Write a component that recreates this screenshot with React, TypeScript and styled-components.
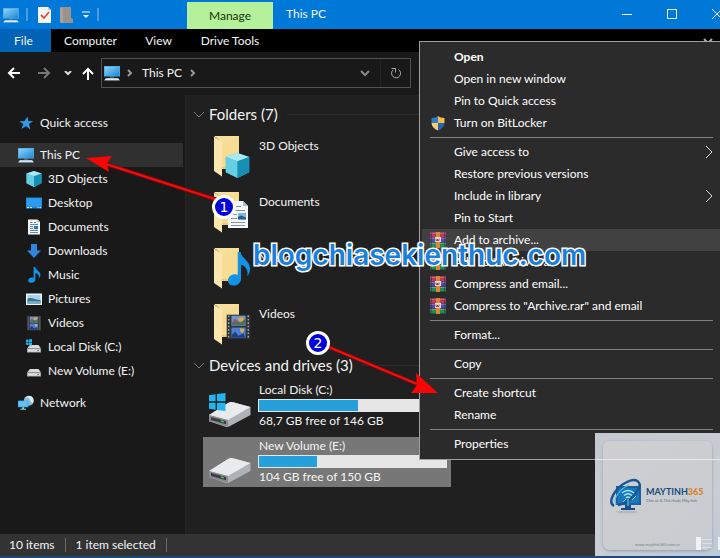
import React from "react";
import styled, { createGlobalStyle, css } from "styled-components";

const Global = createGlobalStyle`
  * { box-sizing: border-box; }
  body { margin: 0; background: #202020; color: #f4f4f4; font: 12px/16px Lato, "Open Sans", sans-serif; }
  button { font: inherit; color: inherit; background: none; border: 0; padding: 0; text-align: left; white-space: nowrap; }
  a { color: inherit; text-decoration: none; }
  h2, ul, p { margin: 0; padding: 0; font-weight: 400; list-style: none; }
  svg { display: block; flex: none; }
`;

const Window = styled.div`
  position: relative;
  min-height: 100vh;
  overflow: hidden;
  display: flex;
  flex-direction: column;
  background: #191919;
  border-bottom: 2px solid #1d4a78;
`;

/* Title bar */
const TitleBar = styled.header`
  display: flex;
  height: 29px;
  background: #0078d7;
`;
const QuickTools = styled.div`
  width: 187px;
  padding-left: 3px;
  display: flex;
  align-items: center;
`;
const ToolButton = styled.button<{ $gap: number }>`
  margin-right: ${(p) => p.$gap}px;
`;
const ToolDivider = styled.span<{ $gap: number }>`
  width: 2px;
  height: 13px;
  margin-right: ${(p) => p.$gap}px;
  background: #5299dc;
`;
const ContextLabel = styled.div`
  width: 86px;
  margin-top: 2px;
  padding-top: 6px;
  text-align: center;
  color: #16330a;
  background: #b5f09b;
`;
const WindowTitle = styled.span`
  flex: 1;
  padding: 6px 13px;
`;
const WindowButton = styled.button`
  width: 45px;
  display: flex;
  justify-content: center;
  align-items: center;
  padding-bottom: 2px;
`;
const WindowButtons = styled.div`
  display: flex;
  margin-right: -19px;
`;

/* Ribbon */
const Ribbon = styled.nav`
  display: flex;
  height: 23px;
  background: #000;
`;
const RibbonTab = styled.button<{ $width: number; $active?: boolean }>`
  width: ${(p) => p.$width}px;
  padding-right: ${(p) => (p.$active ? 4 : 0)}px;
  text-align: center;
  background: ${(p) => (p.$active ? "#0063b5" : "transparent")};
`;
const RibbonToggle = styled.button`
  margin-left: auto;
  padding: 0 7px;
`;

/* Address row */
const AddressRow = styled.div`
  display: flex;
  align-items: center;
  height: 43px;
  padding: 0 309px 1px 7px;
`;
const NavButton = styled.button<{ $gap: number }>`
  margin-right: ${(p) => p.$gap}px;
`;
const Address = styled.div`
  flex: 1;
  display: flex;
  align-items: center;
  height: 30px;
  padding-left: 2px;
  border: 1px solid #525252;
`;
const Crumb = styled.button`
  margin: 0 8px 0 6px;
`;
const AddressSpring = styled.span`
  flex: 1;
`;
const AddressAction = styled.button`
  width: 30px;
  height: 28px;
  display: flex;
  align-items: center;
  justify-content: center;
  & + & { border-left: 1px solid #222; }
`;

/* Body */
const Body = styled.div`
  flex: 1;
  display: grid;
  grid-template-columns: 186px 1fr;
`;
const Sidebar = styled.nav`
  padding-top: 16px;
  padding-right: 2px;
  border-right: 1px solid #242424;
  display: flex;
  flex-direction: column;
`;
const SideLink = styled.a<{ $nested?: boolean; $selected?: boolean; $apart?: boolean }>`
  display: flex;
  align-items: center;
  gap: 6px;
  height: 24px;
  padding-left: ${(p) => (p.$nested ? 26 : 18)}px;
  ${(p) => p.$apart && css`margin-top: 8px;`}
  ${(p) => p.$selected && css`background: #303030;`}
`;
const Content = styled.main`
  background: #202020;
  padding: 6px 0 0 8px;
`;
const GroupHeader = styled.h2`
  display: flex;
  align-items: center;
  gap: 5px;
  height: 26px;
  font-size: 15px;
  line-height: 26px;
  &::after { content: ""; flex: 1; height: 1px; margin-left: 4px; background: #2c2c2c; }
`;
const Tiles = styled.ul`
  display: grid;
  gap: 6px;
  margin: 3px 0 0 9px;
  padding-bottom: 4px;
`;
const Tile = styled.li<{ $selected?: boolean }>`
  display: grid;
  grid-template-columns: 55px 1fr;
  width: 248px;
  height: 50px;
  background: ${(p) => (p.$selected ? "#777" : "transparent")};
`;
const FolderArt = styled.div`
  padding: 5px 0 0 10px;
`;
const FolderName = styled.span`
  padding: 8px 0 0 1px;
`;
const DriveArt = styled.div`
  padding: 9px 0 0 5px;
`;
const DriveInfo = styled.div`
  padding: 1px 4px 0 0;
  & > p { padding-left: 1px; }
`;
const Gauge = styled.div`
  height: 13px;
  margin: 1px 0;
  padding: 1px;
  background: #e6e6e6;
`;
const GaugeFill = styled.div`
  height: 11px;
  background: #26a0da;
`;

const StatusBar = styled.footer`
  display: flex;
  align-items: center;
  height: 22px;
  padding-left: 9px;
  background: #333;
  & > span { padding-right: 10px; margin-right: 10px; line-height: 14px; border-right: 1px solid #6b6b6b; }
`;

/* Context menu */
const Menu = styled.div`
  position: absolute;
  top: 41px;
  left: 419px;
  right: -4px;
  padding: 4px 2px;
  background: #2b2b2b;
  border: 1px solid #a0a0a0;
  color: #fff;
`;
const MenuItem = styled.button<{ $strong?: boolean; $hover?: boolean }>`
  display: grid;
  grid-template-columns: 24px 1fr 9px;
  align-items: center;
  width: 100%;
  height: 22px;
  padding: 0 7px 0 8px;
  font-weight: ${(p) => (p.$strong ? 700 : 400)};
  background: ${(p) => (p.$hover ? "#414141" : "transparent")};
`;
const MenuRule = styled.hr`
  height: 1px;
  margin: 3px 8px;
  border: 0;
  background: #808080;
`;

/* Annotations */
const Arrows = styled.svg`
  position: absolute;
  top: 0;
  left: 0;
  pointer-events: none;
`;
const Step = styled.span<{ $x: number; $y: number }>`
  position: absolute;
  left: ${(p) => p.$x}px;
  top: ${(p) => p.$y}px;
  width: 24px;
  height: 24px;
  border: 3px solid #fff;
  border-radius: 50%;
  background: #0000d8;
  color: #fff;
  font: 14px/18px "DejaVu Sans", sans-serif;
  text-align: center;
`;
const Watermark = styled.div`
  position: absolute;
  left: 253px;
  top: 239px;
  font: 600 28px/32px Inter, sans-serif;
  color: #1b7fdd;
  -webkit-text-stroke: 3px #fff;
  paint-order: stroke fill;
`;
const Brand = styled.aside`
  position: absolute;
  right: 0;
  bottom: -2px;
  width: 125px;
  height: 125px;
  padding: 8px;
  background: linear-gradient(160deg, #c3c7cf, #cbced4 60%, #bec9d8);
`;
const BrandCard = styled.div`
  position: relative;
  height: 109px;
  display: flex;
  align-items: center;
  padding: 0 6px;
  border-radius: 7px;
  background: linear-gradient(135deg, #cfcfd0, #c8cbd1);
  box-shadow: 0 1px 3px #959ba5;
`;
const BrandText = styled.div`
  margin-left: 1px;
  color: #174a7c;
  font: 700 9px/10px Lato, sans-serif;
  white-space: nowrap;
  & > b { color: #d98324; }
  & > small { display: block; font-size: 4px; line-height: 7px; font-weight: 400; color: #56708b; }
`;
const BrandSite = styled.span`
  position: absolute;
  left: 0;
  right: 0;
  bottom: 2px;
  text-align: center;
  font: 4px/6px Lato, sans-serif;
  color: #7e848c;
`;
const MenuEdge = styled.div`
  position: absolute;
  left: 0;
  right: 0;
  top: 26px;
  height: 1px;
  background: #e8eaed;
`;
const ViewSwitch = styled.svg`
  position: absolute;
  right: 0;
  bottom: 8px;
`;

/* Icons */
const PcIcon = () => (
  <svg width="16" height="16" viewBox="0 0 16 16">
    <defs><linearGradient id="pc" x1="0" y1="0" x2="1" y2="1"><stop stopColor="#8fd6fb" /><stop offset="1" stopColor="#1d87d6" /></linearGradient></defs>
    <path d="M0 1h16v10.500H0z" fill="#4ea8dd" /><path d="M.7 1.700h14.600v9H.7z" fill="url(#pc)" />
    <path d="M6 11.500h4v1H6z" fill="#6c8ea8" /><path d="M2 13h12l2 2.500H0z" fill="#b5cbdc" /><path d="M1 14.500h14" stroke="#e4eef5" strokeWidth=".8" />
  </svg>
);
const StarIcon = () => (
  <svg width="16" height="16" viewBox="0 0 16 16"><path d="M9.500 1.500l.8 4.600 5 .2-4.300 2.500 1.200 5.700-4-3.300-4.800 2.600 2-4.700L1.200 6.500l5.300-.6z" fill="#2f9be6" /></svg>
);
const Cube = ({ size = 16 }: { size?: number }) => (
  <svg width={size} height={size} viewBox="0 0 16 16">
    <path d="M8 0l7.500 2.500v9.800L8 16 .5 12.300V2.500z" fill="#36b4cf" /><path d="M8 0l7.500 2.500L8 5.200.5 2.500z" fill="#a9e9f2" />
    <path d="M.5 2.500L8 5.200V16L.5 12.300z" fill="#66d0e2" /><path d="M8 5.200l7.500-2.700v9.800L8 16z" fill="#1590b4" />
  </svg>
);
const DesktopIcon = () => (
  <svg width="16" height="16" viewBox="0 0 16 16"><path d="M0 2.500h16v11H0z" fill="#1c86dc" /><path d="M.8 3.200h14.400v8.500H.8z" fill="#2c9cf0" /><path d="M1 12.600h2m1 0h2m5.500 0h1m1 0h1.500" stroke="#d8efff" /></svg>
);
const DocSheet = ({ width = 16, height = 16 }: { width?: number; height?: number }) => (
  <svg width={width} height={height} viewBox="0 0 16 16">
    <path d="M2 .5h9.500L14 3v12.500H2z" fill="#f2f6f9" /><path d="M11.500.5V3H14" fill="#aebdc9" />
    <path d="M4 3.500h2.500M8 3.500h2M4 5.500h8M4 7.500h3M4 9.500h3M4 11.500h8M4 13.500h8" stroke="#547b9b" strokeWidth=".9" /><path d="M8 7h4v3.200H8z" fill="#2d78b4" />
  </svg>
);
const DocLarge = () => (
  <svg width="21" height="28" viewBox="0 0 21 28">
    <path d="M0 0h15l5 5v22H0z" fill="#f5f7f9" /><path d="M15 0v5h5" fill="#b3bec8" />
    <path d="M3 5.500h10M3 9.500h14M3 13.500h6M3 17.500h6M3 21.500h14M3 24.500h14" stroke="#7d93a6" /><path d="M10 12h8v6.500h-8z" fill="#7fb6dd" /><path d="M10 16l3-1.500 5 2v2h-8z" fill="#24618f" />
  </svg>
);
const DownIcon = () => (
  <svg width="16" height="16" viewBox="0 0 16 16"><path d="M5 1h6v6.500h4L8 15 1 7.500h4z" fill="#2f86dc" /></svg>
);
const NoteIcon = ({ width = 16, height = 16 }: { width?: number; height?: number }) => (
  <svg width={width} height={height} viewBox="0 0 16 16" preserveAspectRatio="none">
    <path d="M7.600 0h1.500c.5 3 5 4 5.300 7.500.1 1.800-.8 3.200-1.600 4 .8-3-1-5-3.400-5.500v6.500c0 2-1.800 3.300-4 3.300-1.900 0-3.200-.9-3.200-2.400 0-1.700 1.900-2.900 3.900-2.900.6 0 1.100.1 1.500.3z" fill="#1393e6" />
  </svg>
);
const PictureIcon = () => (
  <svg width="16" height="16" viewBox="0 0 16 16"><path d="M0 2.500h16v11.500H0z" fill="#eef3f5" /><path d="M1.500 4h13v8.500h-13z" fill="#a2d5ea" /><path d="M1.500 7.500c4-2 7 1.500 13 1.500v3.500h-13z" fill="#35728c" /><path d="M1.500 10.500c4-1 9 0 13-.5v2.500h-13z" fill="#73aebd" /></svg>
);
const Film = ({ size = 16 }: { size?: number }) => (
  <svg width={size} height={size} viewBox="0 0 16 16">
    <path d="M1 1h14v14.500H1z" fill="#303136" /><path d="M3.800 1.600h8.400v6H3.800z" fill="#6c95cc" /><path d="M3.800 8.600h8.400v6.200H3.800z" fill="#4f7fd1" />
    <path d="M4 5.500l3-1 2 1.200 3-2v3.600H4z" fill="#4b7550" /><path d="M8 3l2-.7 1.500 1L10 5H8z" fill="#dfa546" /><path d="M5 4l1.500-.5.5 2H5z" fill="#b64382" />
    <path d="M4 13l2-2 2 2.500 3-1.500 1 2.700H4z" fill="#243f80" /><path d="M9 9l2.500.5L10.500 12 9 11z" fill="#d9ae58" />
    <path d="M2.200 1.500v14M13.800 1.500v14" stroke="#a0a5ab" strokeWidth=".9" strokeDasharray="1 1" />
  </svg>
);
const WinLogo = () => <path d="M0 1l3-.4v3.200H0zM3.600.5L7.500 0v3.800H3.600zM0 4.400h3v3.200L0 7.200zM3.600 4.400h3.900v3.800l-3.900-.5z" fill="#22b5ee" />;
const DiskIcon = ({ win }: { win?: boolean }) => (
  <svg width="16" height="16" viewBox="0 0 16 16">
    <path d="M4 6h8.500L15 9.500H1z" fill="#d9d9d9" /><path d="M1 9.500h14v4H1z" fill="#aaa" /><path d="M2 10.400h12v2.200H2z" fill="#e4e4e4" /><path d="M11 11.500h2" stroke="#33a34a" />
    {win && <g transform="scale(.8)"><WinLogo /></g>}
  </svg>
);
const NetworkIcon = () => (
  <svg width="16" height="16" viewBox="0 0 17 16"><circle cx="11.500" cy="5.500" r="5.300" fill="#8bbbd4" /><path d="M8 2.500c2-1 4 0 4.500 2s2 2 3 4c1.300-2 1.500-5-1-7.300C12 0 9.500.5 8 2.500z" fill="#dcecf2" /><path d="M0 5.500h11v7H0z" fill="#45aeec" /><path d="M.7 6.200L10 6v5.500H.7z" fill="#62c0f6" /><path d="M4.500 12.500h2v1.700h2v1h-6v-1h2z" fill="#9acbea" /></svg>
);
const Folder = ({ children }: { children: React.ReactNode }) => (
  <svg width="38" height="44" viewBox="0 0 38 44">
    <path d="M6 1h20v33H9z" fill="#eccb78" /><path d="M9 1h17v31H9z" fill="#f6dc94" />
    <path d="M1 1.500l8 5v35l-8-5.500z" fill="#fbe7ae" /><path d="M1 1h24v2L9 7z" fill="#f8df9b" />
    {children}
  </svg>
);
const FolderNested = {
  cube: <svg x="12" y="18" width="25" height="25"><Cube size={25} /></svg>,
  doc: <svg x="15" y="10" width="21" height="28"><DocLarge /></svg>,
  note: <svg x="11" y="5" width="30" height="34"><NoteIcon width={29} height={34} /></svg>,
  film: <svg x="12" y="10" width="26" height="28"><Film size={27} /></svg>,
};
const Drive = ({ win }: { win?: boolean }) => (
  <svg width="44" height="38" viewBox="0 0 44 38">
    <path d="M1 25l19-12q3-1.500 6-.5l16.500 4.500v8L22 36q-2 1.500-4 1L1 31z" fill="#aeb1b5" />
    <path d="M1 25l19-12q3-1.500 6-.5l16.500 4.500L20 30z" fill="#e9eaec" />
    <path d="M1 25l19 5v7L1 31.500z" fill="#898c90" /><path d="M3 27l15 4v3.300L3 30z" fill="#3b3f42" /><path d="M13 31l3 .8" stroke="#48bf67" strokeWidth="1.500" />
    {win && <g transform="translate(1 3) scale(2.2)"><WinLogo /></g>}
  </svg>
);
const ShieldIcon = () => (
  <svg width="16" height="16" viewBox="0 0 16 16"><path d="M8 1v7H1.500V3C4 3 6.500 2.300 8 1z" fill="#2d7cc9" /><path d="M8 1c1.500 1.300 4 2 6.500 2v5H8z" fill="#f2bb4b" /><path d="M1.500 8H8v7.500C4 14 1.800 11.500 1.500 8z" fill="#f6cd73" /><path d="M14.500 8H8v7.500c4-1.500 6.200-4 6.500-7.500z" fill="#2364ac" /></svg>
);
const RarIcon = () => (
  <svg width="16" height="16" viewBox="0 0 16 16">
    <path d="M0 .5h16V5H0z" fill="#c23557" /><path d="M0 5.500h16v4.700H0z" fill="#4b4cb4" /><path d="M0 10.700h16v4.800H0z" fill="#238b50" />
    <path d="M0 1.200h16M0 6.200h16M0 11.400h16" stroke="#e4a0a4" strokeWidth=".6" /><path d="M1.200.5v15M14.800.5v15" stroke="#262b42" strokeWidth=".7" />
    <path d="M6 0h4v16H6z" fill="#d7863a" /><path d="M5 5h6v5H5z" fill="#e9d8d8" /><path d="M6 6.500v2h1.500V7v1.500H9V6.500" fill="none" stroke="#7b3434" strokeWidth=".8" />
  </svg>
);
const Glyph = ({ d, w, h, color = "#fff", sw = 1 }: { d: string; w: number; h: number; color?: string; sw?: number }) => (
  <svg width={w} height={h} viewBox={`0 0 ${w} ${h}`}><path d={d} fill="none" stroke={color} strokeWidth={sw} /></svg>
);
const BrandLogo = () => (
  <svg width="36" height="37" viewBox="0 0 36 37">
    <ellipse cx="18" cy="35" rx="11" ry="1.500" fill="#b4b8bf" />
    <path d="M7 9h25v19H7z" fill="#1c5fa5" /><path d="M9 11h21v15H9z" fill="#1878be" /><path d="M16 28h6v3h4v2H12v-2h4z" fill="#174f8f" />
    <path d="M5 29C-2 25 6 11 17 5.500 27 0 34 5 29 13 26 19 17 27 9 28" fill="none" stroke="#1c568f" strokeWidth="2.500" />
    <path d="M7 27C3 22 12 11 20 8" fill="none" stroke="#53bde0" strokeWidth="1.200" />
    <path d="M13 16q6-5 12 0M15 18.500q4-3.500 8 0M17 21q2-2 4 0" fill="none" stroke="#a9e5e5" strokeWidth="1.300" /><path d="M19 22v7M23 23l4-4M14 25l3-3" stroke="#71cee4" />
  </svg>
);

const places = [
  { name: "Quick access", icon: <StarIcon /> },
  { name: "This PC", icon: <PcIcon />, selected: true, apart: true },
  { name: "3D Objects", icon: <Cube />, nested: true },
  { name: "Desktop", icon: <DesktopIcon />, nested: true },
  { name: "Documents", icon: <DocSheet />, nested: true },
  { name: "Downloads", icon: <DownIcon />, nested: true },
  { name: "Music", icon: <NoteIcon />, nested: true },
  { name: "Pictures", icon: <PictureIcon />, nested: true },
  { name: "Videos", icon: <Film />, nested: true },
  { name: "Local Disk (C:)", icon: <DiskIcon win />, nested: true },
  { name: "New Volume (E:)", icon: <DiskIcon />, nested: true },
  { name: "Network", icon: <NetworkIcon />, apart: true },
];
const folders = [
  { name: "3D Objects", art: FolderNested.cube },
  { name: "Documents", art: FolderNested.doc },
  { name: "Music", art: FolderNested.note },
  { name: "Videos", art: FolderNested.film },
];
const drives = [
  { name: "Local Disk (C:)", free: "68,7 GB free of 146 GB", used: 53, win: true },
  { name: "New Volume (E:)", free: "104 GB free of 150 GB", used: 31, selected: true },
];
type Entry = { label: string; icon?: React.ReactNode; strong?: boolean; hover?: boolean; sub?: boolean };
const menu: Entry[][] = [
  [{ label: "Open", strong: true }, { label: "Open in new window" }, { label: "Pin to Quick access" }, { label: "Turn on BitLocker", icon: <ShieldIcon /> }],
  [
    { label: "Give access to", sub: true }, { label: "Restore previous versions" }, { label: "Include in library", sub: true }, { label: "Pin to Start" },
    { label: "Add to archive...", icon: <RarIcon />, hover: true }, { label: 'Add to "Archive.rar"', icon: <RarIcon /> },
    { label: "Compress and email...", icon: <RarIcon /> }, { label: 'Compress to "Archive.rar" and email', icon: <RarIcon /> },
  ],
  [{ label: "Format..." }],
  [{ label: "Copy" }],
  [{ label: "Create shortcut" }, { label: "Rename" }],
  [{ label: "Properties" }],
];

export default function App() {
  return (
    <Window>
      <Global />
      <TitleBar>
        <QuickTools>
          <ToolButton $gap={7} aria-label="System menu"><PcIcon /></ToolButton>
          <ToolDivider $gap={10} />
          <ToolButton $gap={9} aria-label="Properties">
            <svg width="13" height="16" viewBox="0 0 13 16"><path d="M0 0h10l3 3v13H0z" fill="#f5f5f5" /><path d="M10 0v3h3" fill="#b7c2cb" /><path d="M3 8l3 3 5-6" fill="none" stroke="#df5032" strokeWidth="1.800" /></svg>
          </ToolButton>
          <ToolButton $gap={8} aria-label="New folder">
            <svg width="14" height="16" viewBox="0 0 14 16"><path d="M0 0h11v11l2 1v4H0z" fill="#9a928b" /><path d="M0 0l3 2v14l-3-2z" fill="#aaa19a" /></svg>
          </ToolButton>
          <ToolButton $gap={7} aria-label="Customize toolbar">
            <svg width="8" height="8" viewBox="0 0 8 8"><path d="M0 1h8" stroke="#fff" /><path d="M1 4h6L4 7z" fill="#fff" /></svg>
          </ToolButton>
          <ToolDivider $gap={0} />
        </QuickTools>
        <ContextLabel>Manage</ContextLabel>
        <WindowTitle>This PC</WindowTitle>
        <WindowButtons>
          <WindowButton aria-label="Minimize"><Glyph w={10} h={10} d="M0 5.500h10" /></WindowButton>
          <WindowButton aria-label="Maximize"><Glyph w={10} h={10} d="M.5.5h9v9h-9z" /></WindowButton>
          <WindowButton aria-label="Close"><Glyph w={10} h={10} d="M0 0l10 10M10 0L0 10" /></WindowButton>
        </WindowButtons>
      </TitleBar>
      <Ribbon>
        <RibbonTab $width={51} $active>File</RibbonTab>
        <RibbonTab $width={79}>Computer</RibbonTab>
        <RibbonTab $width={57}>View</RibbonTab>
        <RibbonTab $width={86}>Drive Tools</RibbonTab>
        <RibbonToggle aria-label="Expand ribbon"><Glyph w={10} h={6} d="M1 1l4 4 4-4" color="#aaa" sw={2} /></RibbonToggle>
      </Ribbon>
      <AddressRow>
        <NavButton $gap={17} aria-label="Back"><Glyph w={14} h={12} d="M13 6H2M7 1L2 6l5 5" sw={2} /></NavButton>
        <NavButton $gap={13} aria-label="Forward"><Glyph w={13} h={12} d="M0 6h11M6 1l5 5-5 5" color="#777" sw={2} /></NavButton>
        <NavButton $gap={10} aria-label="Recent locations"><Glyph w={8} h={5} d="M1 0l3 3 3-3" color="#ddd" sw={2} /></NavButton>
        <NavButton $gap={7} aria-label="Up"><Glyph w={12} h={13} d="M6 13V2M1 7l5-5 5 5" sw={2} /></NavButton>
        <Address>
          <PcIcon />
          <Glyph w={16} h={8} d="M8 1l3 3-3 3" color="#999" sw={2} />
          <Crumb>This PC</Crumb>
          <Glyph w={6} h={8} d="M1 1l3 3-3 3" color="#999" sw={2} />
          <AddressSpring />
          <AddressAction aria-label="Previous locations"><Glyph w={10} h={7} d="M1 1l4 4 4-4" color="#888" sw={2} /></AddressAction>
          <AddressAction aria-label="Refresh"><Glyph w={12} h={12} d="M8.500 2.500A4.500 4.500 0 1 1 3 3M1.500 1.500h4v4" color="#aaa" sw={1} /></AddressAction>
        </Address>
      </AddressRow>
      <Body>
        <Sidebar>
          {places.map((p) => (
            <SideLink key={p.name} href="#" $nested={p.nested} $selected={p.selected} $apart={p.apart}>{p.icon}{p.name}</SideLink>
          ))}
        </Sidebar>
        <Content>
          <GroupHeader><Glyph w={10} h={7} d="M0 1l5 5 5-5" color="#777" />Folders (7)</GroupHeader>
          <Tiles>
            {folders.map((f) => (
              <Tile key={f.name}><FolderArt><Folder>{f.art}</Folder></FolderArt><FolderName>{f.name}</FolderName></Tile>
            ))}
          </Tiles>
          <GroupHeader><Glyph w={10} h={7} d="M0 1l5 5 5-5" color="#777" />Devices and drives (3)</GroupHeader>
          <Tiles>
            {drives.map((d) => (
              <Tile key={d.name} $selected={d.selected}>
                <DriveArt><Drive win={d.win} /></DriveArt>
                <DriveInfo>
                  <p>{d.name}</p>
                  <Gauge><GaugeFill style={{ width: `${d.used}%` }} /></Gauge>
                  <p>{d.free}</p>
                </DriveInfo>
              </Tile>
            ))}
          </Tiles>
        </Content>
      </Body>
      <StatusBar><span>10 items</span><span>1 item selected</span></StatusBar>

      <Menu role="menu">
        {menu.map((group, i) => (
          <React.Fragment key={i}>
            {i > 0 && <MenuRule />}
            {group.map((m) => (
              <MenuItem key={m.label} role="menuitem" $strong={m.strong} $hover={m.hover}>
                <span>{m.icon}</span><span>{m.label}</span>
                {m.sub && <Glyph w={8} h={14} d="M1 1l6 6-6 6" color="#ddd" />}
              </MenuItem>
            ))}
          </React.Fragment>
        ))}
      </Menu>

      <Arrows width="720" height="558" viewBox="0 0 720 558">
        <path d="M224 202L106 164M319 343L417 384" stroke="#7d0808" strokeWidth="4" />
        <path d="M224 202L106 164M319 343L417 384" stroke="#ee1010" strokeWidth="2" />
        <path d="M86 158l26-2-5 7 2 9zM438 393l-27 0 6-8-1-12z" fill="#fa0505" />
      </Arrows>
      <Step $x={212} $y={195}>1</Step>
      <Step $x={306} $y={331}>2</Step>
      <Watermark>blogchiasekienthuc.com</Watermark>
      <Brand>
        <BrandCard>
          <BrandLogo />
          <BrandText>MAYTINH<b>365</b><small>Chia sẻ &amp; Thủ thuật Máy tính</small></BrandText>
          <BrandSite>www.maytinh365.com.vn</BrandSite>
        </BrandCard>
        <MenuEdge />
        <ViewSwitch width="24" height="13" viewBox="0 0 24 13"><path d="M0 0h5v13H0zM22 0h2v13h-2z" fill="#edf2f7" /><path d="M6 2.500h10M6 6.500h10M6 10.500h10" stroke="#dce1e7" /></ViewSwitch>
      </Brand>
    </Window>
  );
}
